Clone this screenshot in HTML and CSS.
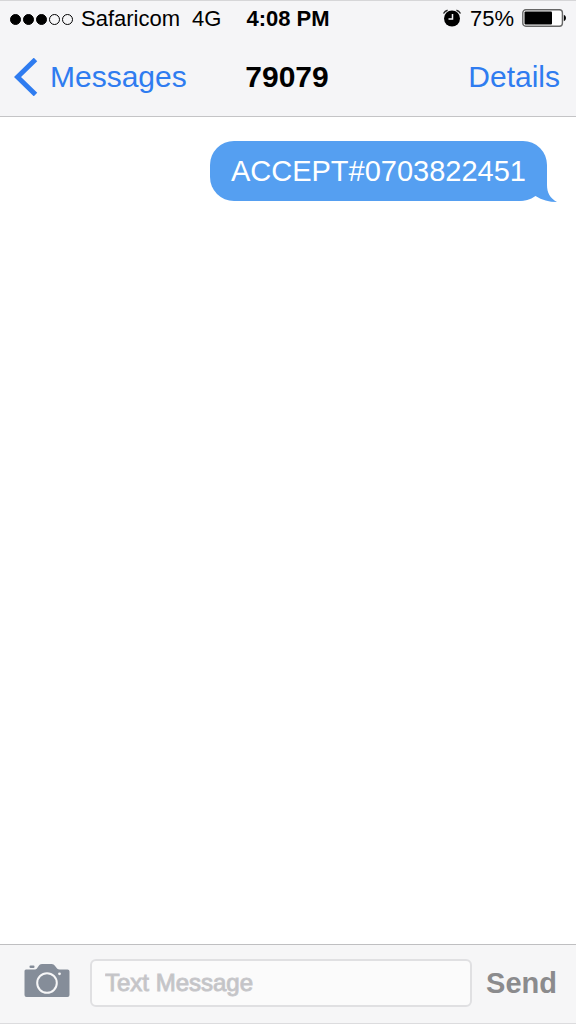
FILE: index.html
```
<!DOCTYPE html>
<html lang="en">
<head>
    <meta charset="UTF-8">
    <meta name="viewport" content="width=device-width, initial-scale=1.0">
    <title>Messages</title>
    <link rel="stylesheet" href="styles.css">
</head>
<body>
    <header class="top">
        <div class="status-bar">
            <div class="carrier">
                <div class="signal">
                    <span class="dot full"></span>
                    <span class="dot full"></span>
                    <span class="dot full"></span>
                    <span class="dot"></span>
                    <span class="dot"></span>
                </div>
                <span>Safaricom</span>
                <span class="network">4G</span>
            </div>
            <span class="time">4:08 PM</span>
            <div class="battery-info">
                <svg class="alarm" viewBox="0 0 20 18" aria-hidden="true">
                    <path d="M1.5 4.5Q3 1.8 5.6 1.2M18.5 4.5Q17 1.8 14.4 1.2" fill="none" stroke="#222" stroke-width="1.4"/>
                    <circle cx="10" cy="9.5" r="8"/>
                    <path d="M10.5 5V10H6.5" fill="none" stroke="#f5f5f7" stroke-width="1.5"/>
                </svg>
                <span>75%</span>
                <svg class="battery" viewBox="0 0 44 18" aria-hidden="true">
                    <rect x="0.8" y="0.8" width="39.6" height="16.4" rx="3" fill="#fff" stroke="#666" stroke-width="1.4"/>
                    <rect x="2.5" y="2.5" width="27.5" height="13" rx="1"/>
                    <path d="M41.8 5.8Q44 6.5 44 9T41.8 12.2Z"/>
                </svg>
            </div>
        </div>
        <nav class="nav-bar">
            <a href="#" class="back">
                <svg class="chevron" viewBox="0 0 24 38" aria-hidden="true">
                    <path d="M21.5 1.5L3.5 19L21.5 36.5" fill="none" stroke="#2f7cf0" stroke-width="5"/>
                </svg>
                Messages
            </a>
            <h1>79079</h1>
            <a href="#" class="details">Details</a>
        </nav>
    </header>

    <main class="chat">
        <div class="bubble">
            ACCEPT#0703822451
            <svg class="tail" viewBox="0 0 40 36" aria-hidden="true">
                <path d="M30 0V19C30 27 33 32 40 36C32 36 25 34 18.5 30C13 34 8 35 0 35V0Z" fill="#559ff1"/>
            </svg>
        </div>
    </main>

    <form class="composer">
        <button type="button" class="camera" aria-label="Camera">
            <svg viewBox="0 1 46 36" aria-hidden="true">
                <rect x="5.5" y="2.5" width="5" height="2.5" rx="1"/>
                <path d="M2 6.5H11C14 6.5 14 1 18 1H27.5C31.5 1 32 6.5 35.5 6.5H43.5Q45.5 6.5 45.5 8.500V32Q45.500 34 43.500 34H2.500Q0.500 34 0.500 32V8Q0.500 6.500 2 6.500Z"/>
                <circle cx="23" cy="20" r="9.8" fill="none" stroke="#f7f7f8" stroke-width="2"/>
                <circle cx="35.5" cy="10.8" r="1.4" fill="#f7f7f8"/>
            </svg>
        </button>
        <input type="text" class="message" placeholder="Text Message" aria-label="Text Message">
        <button type="submit" class="send">Send</button>
    </form>
</body>
</html>
```
FILE: styles.css
```
* {
    box-sizing: border-box;
}
body {
    margin: 0;
    min-height: 100vh;
    display: flex;
    flex-direction: column;
    font-family: "Liberation Sans", Arial, sans-serif;
    background-color: #fff;
    color: #000;
}
.top {
    background-color: #f5f5f7;
    border-top: 1px solid #d6d6d8;
    border-bottom: 1px solid #c4c4c6;
}
.status-bar {
    display: grid;
    grid-template-columns: 1fr auto 1fr;
    align-items: center;
    height: 36px;
    padding: 0 10px;
    font-size: 22px;
    line-height: 24px;
}
.carrier {
    display: flex;
    align-items: center;
}
.signal {
    display: flex;
    gap: 2px;
    margin-right: 8px;
}
.dot {
    width: 11px;
    height: 11px;
    border: 1px solid #000;
    border-radius: 50%;
}
.full {
    background-color: #000;
}
.network {
    margin-left: 12px;
}
.time {
    font-weight: bold;
}
.battery-info {
    display: flex;
    justify-content: flex-end;
    align-items: center;
    gap: 8px;
}
.battery-info svg {
    height: 18px;
    margin-bottom: 3px;
}
.alarm {
    width: 20px;
}
.battery {
    width: 44px;
}
/* Navigation */
.nav-bar {
    display: grid;
    grid-template-columns: 1fr auto 1fr;
    align-items: center;
    height: 79px;
    padding: 0 16px 0 14px;
    font-size: 30px;
    line-height: 36px;
}
.nav-bar a {
    color: #2f7cf0;
    text-decoration: none;
}
.back {
    display: flex;
    align-items: center;
    gap: 12px;
}
.chevron {
    width: 24px;
    height: 38px;
}
.nav-bar h1 {
    margin: 0;
    font-size: 30px;
}
.details {
    text-align: right;
}
/* Conversation */
.chat {
    flex: 1;
    display: flex;
    flex-direction: column;
    align-items: flex-end;
    padding: 24px 29px;
}
.bubble {
    position: relative;
    padding: 12px 21px;
    border-radius: 24px 24px 30px 24px;
    background-color: #559ff1;
    color: #fff;
    font-size: 29px;
    line-height: 36px;
}
.tail {
    position: absolute;
    right: -10px;
    bottom: -1px;
    width: 40px;
    height: 36px;
    z-index: -1;
}
/* Message input */
.composer {
    display: flex;
    align-items: center;
    padding: 14px 19px 16px 24px;
    background-color: #f6f6f7;
    border-top: 1px solid #bfbfc1;
    border-bottom: 1px solid #dcdcde;
}
.composer button {
    padding: 0;
    border: none;
    background: none;
    font-family: inherit;
    cursor: pointer;
}
.camera svg {
    display: block;
    width: 46px;
    height: 36px;
    margin-bottom: 2px;
    fill: #858d99;
}
.message {
    flex: 1;
    min-width: 0;
    height: 48px;
    margin: 0 14px 0 20px;
    padding: 0 13px;
    border: 2px solid #e0e0e2;
    border-radius: 6px;
    background-color: #fbfbfb;
    font-family: inherit;
    font-size: 24px;
}
.message::placeholder {
    color: #c2c2c5;
    -webkit-text-stroke: 1px #c8c8cb;
}
.composer .send {
    color: #8b8b8d;
    font-size: 29px;
    font-weight: bold;
}
```
